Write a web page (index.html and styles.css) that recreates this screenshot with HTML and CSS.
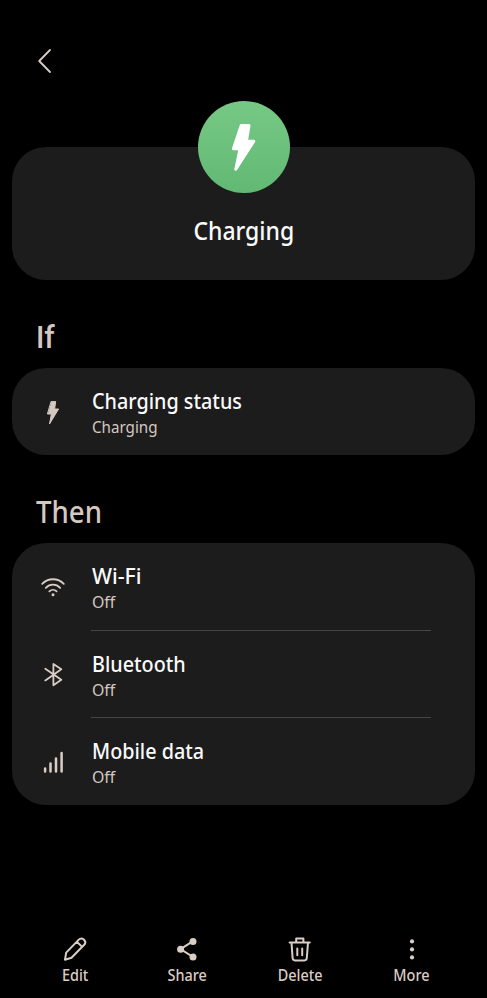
FILE: index.html
```html
<!DOCTYPE html>
<html lang="en">
<head>
    <meta charset="UTF-8">
    <meta name="viewport" content="width=device-width, initial-scale=1.0">
    <title>Charging</title>
    <link rel="stylesheet" href="styles.css">
</head>
<body>
    <header class="top-bar">
        <svg viewBox="0 0 28 28"><path d="M19 4 L8.2 15 L19 26"/></svg>
    </header>

    <main>
        <section class="card hero">
            <div class="hero-icon">
                <svg viewBox="0 0 92 92"><path d="M43.2 24.4 H51 L48.4 40.3 H55.8 L37.8 68.2 L42 47.8 H35.4 Z"/></svg>
            </div>
            <h1><span>Charging</span></h1>
        </section>

        <h2><span class="if-text">If</span></h2>
        <section class="card">
            <div class="row">
                <svg class="bolt" viewBox="0 0 28 28"><path d="M12.4 3.6 H16.7 L15.6 11 H19.6 L10.5 26 L12.4 16 H8.8 Z"/></svg>
                <div class="info">
                    <h3><span>Charging status</span></h3>
                    <p><span>Charging</span></p>
                </div>
            </div>
        </section>

        <h2><span>Then</span></h2>
        <section class="card">
            <div class="row">
                <svg viewBox="0 0 28 28">
                    <path d="M3.2 10.8 C9 4.7 19 4.7 24.8 10.8 M6.8 14.8 C10.8 10.6 17.2 10.6 21.2 14.8 M10.4 18.4 C12.5 16.3 15.5 16.3 17.6 18.4"/>
                    <circle cx="14" cy="21.8" r="1.5"/>
                </svg>
                <div class="info">
                    <h3><span class="wifi-text">Wi-Fi</span></h3>
                    <p><span class="off-text">Off</span></p>
                </div>
            </div>
            <div class="row">
                <svg viewBox="0 0 28 28"><path d="M6.3 8.8 L22.3 19.8 L14.4 25.2 V4 L22.3 9.2 L6.3 20.4"/></svg>
                <div class="info">
                    <h3><span>Bluetooth</span></h3>
                    <p><span class="off-text">Off</span></p>
                </div>
            </div>
            <div class="row">
                <svg class="signal" viewBox="0 0 28 28"><path d="M6.1 20.6 V23.6 M11.5 15.6 V23.6 M17 10.4 V23.6 M22.6 5 V23.6"/></svg>
                <div class="info">
                    <h3><span>Mobile data</span></h3>
                    <p><span class="off-text">Off</span></p>
                </div>
            </div>
        </section>
    </main>

    <nav class="bottom-bar">
        <div class="action">
            <svg viewBox="0 0 28 28"><path d="M4 24.7 L5.2 17.6 L17.8 4.6 Q20.2 2.3 22.7 4.5 L23.2 5 Q25.5 7.4 23.2 9.8 L10.5 22.8 Z M15.8 6.7 L21.2 11.9"/></svg>
            <span>Edit</span>
        </div>
        <div class="action">
            <svg viewBox="0 0 28 28">
                <path d="M20 6.2 L7.6 14.2 L20 22"/>
                <circle cx="20" cy="6.4" r="3.5"/>
                <circle cx="7.6" cy="14.2" r="3.5"/>
                <circle cx="20" cy="22" r="3.5"/>
            </svg>
            <span>Share</span>
        </div>
        <div class="action">
            <svg viewBox="0 0 28 28"><path d="M3.6 7.4 H23.8 M10.2 7 V3.6 H17.4 V7 M5.5 7.6 L6.6 23 Q6.8 25.4 9 25.4 H18.4 Q20.6 25.4 20.8 23 L22 7.6 M11.3 13.4 V20.2 M16.2 13.4 V20.2"/></svg>
            <span>Delete</span>
        </div>
        <div class="action">
            <svg viewBox="0 0 28 28">
                <circle cx="14" cy="6.4" r="2.1"/>
                <circle cx="14" cy="14.4" r="2.1"/>
                <circle cx="14" cy="22.4" r="2.1"/>
            </svg>
            <span>More</span>
        </div>
    </nav>
</body>
</html>
```
FILE: styles.css
```css
* {
    box-sizing: border-box;
    margin: 0;
    padding: 0;
}

body {
    background: #000;
    color: #fafafa;
    height: 998px;
    display: flex;
    flex-direction: column;
    font-family: "Noto Sans", Roboto, sans-serif;
    overflow: hidden;
}

svg {
    display: block;
    width: 28px;
    height: 28px;
    fill: none;
    stroke: #dacdc6;
    stroke-width: 1.8;
    stroke-linecap: round;
    stroke-linejoin: round;
}

circle {
    fill: #dacdc6;
    stroke: none;
}

/* slightly condensed text */
h1 span, h2 span, h3 span, p span, .action span {
    display: inline-block;
    white-space: nowrap;
    transform-origin: left center;
    transform: scaleX(0.92);
}

.top-bar {
    height: 147px;
    padding: 46px 0 0 31px;
}

main {
    padding: 0 12px;
}

.card {
    background: #1c1c1c;
    border-radius: 34px;
    width: 463px;
}

.hero {
    height: 133px;
    display: flex;
    flex-direction: column;
    align-items: center;
}

.hero-icon {
    width: 92px;
    height: 92px;
    margin-top: -46px;
    border-radius: 50%;
    background: linear-gradient(#76c985, #62b973);
}

.hero-icon svg {
    width: 92px;
    height: 92px;
    fill: #fff;
    stroke: #fff;
    stroke-width: 3;
}

h1 {
    font-size: 25px;
    font-weight: 500;
    line-height: 34px;
    margin-top: 20px;
}

h1 span {
    transform-origin: center;
}

h2 {
    color: #d5c8c1;
    font-size: 30px;
    font-weight: 500;
    line-height: 40px;
    height: 88px;
    padding: 37px 0 0 24px;
}

h2 .if-text {
    font-family: Roboto, sans-serif;
    font-size: 31px;
    font-weight: 500;
    transform: scaleX(0.95);
}

.row {
    display: flex;
    align-items: center;
    height: 87.3px;
    padding-left: 27px;
}

.info {
    width: 340px;
    height: 100%;
    margin-left: 24px;
    padding: 18px 0 0 1px;
}

.row:not(:last-child) .info {
    border-bottom: 1px solid #454545;
}

.card .row:only-child .info {
    border-bottom: none;
}

.bolt {
    fill: #d5c8c1;
    stroke: #d5c8c1;
    stroke-width: 1;
}

.signal {
    stroke-width: 2.5;
}

h3 {
    font-size: 21.5px;
    font-weight: 500;
    line-height: 30px;
}

h3 .wifi-text {
    transform: scaleX(0.99);
}

p {
    color: #d5c8c1;
    font-size: 16.5px;
    line-height: 22px;
}

p .off-text {
    transform: scaleX(0.96);
}

.bottom-bar {
    display: flex;
    margin-top: auto;
    padding: 0 19px;
    height: 63px;
}

.action {
    flex: 1;
    display: flex;
    flex-direction: column;
    align-items: center;
    color: #dacdc6;
    font-size: 15.5px;
    font-weight: 500;
    line-height: 22px;
}

.action svg {
    stroke-width: 2;
}

.action span {
    margin-top: 1px;
    transform-origin: center;
    transform: scaleX(0.93);
}
```
